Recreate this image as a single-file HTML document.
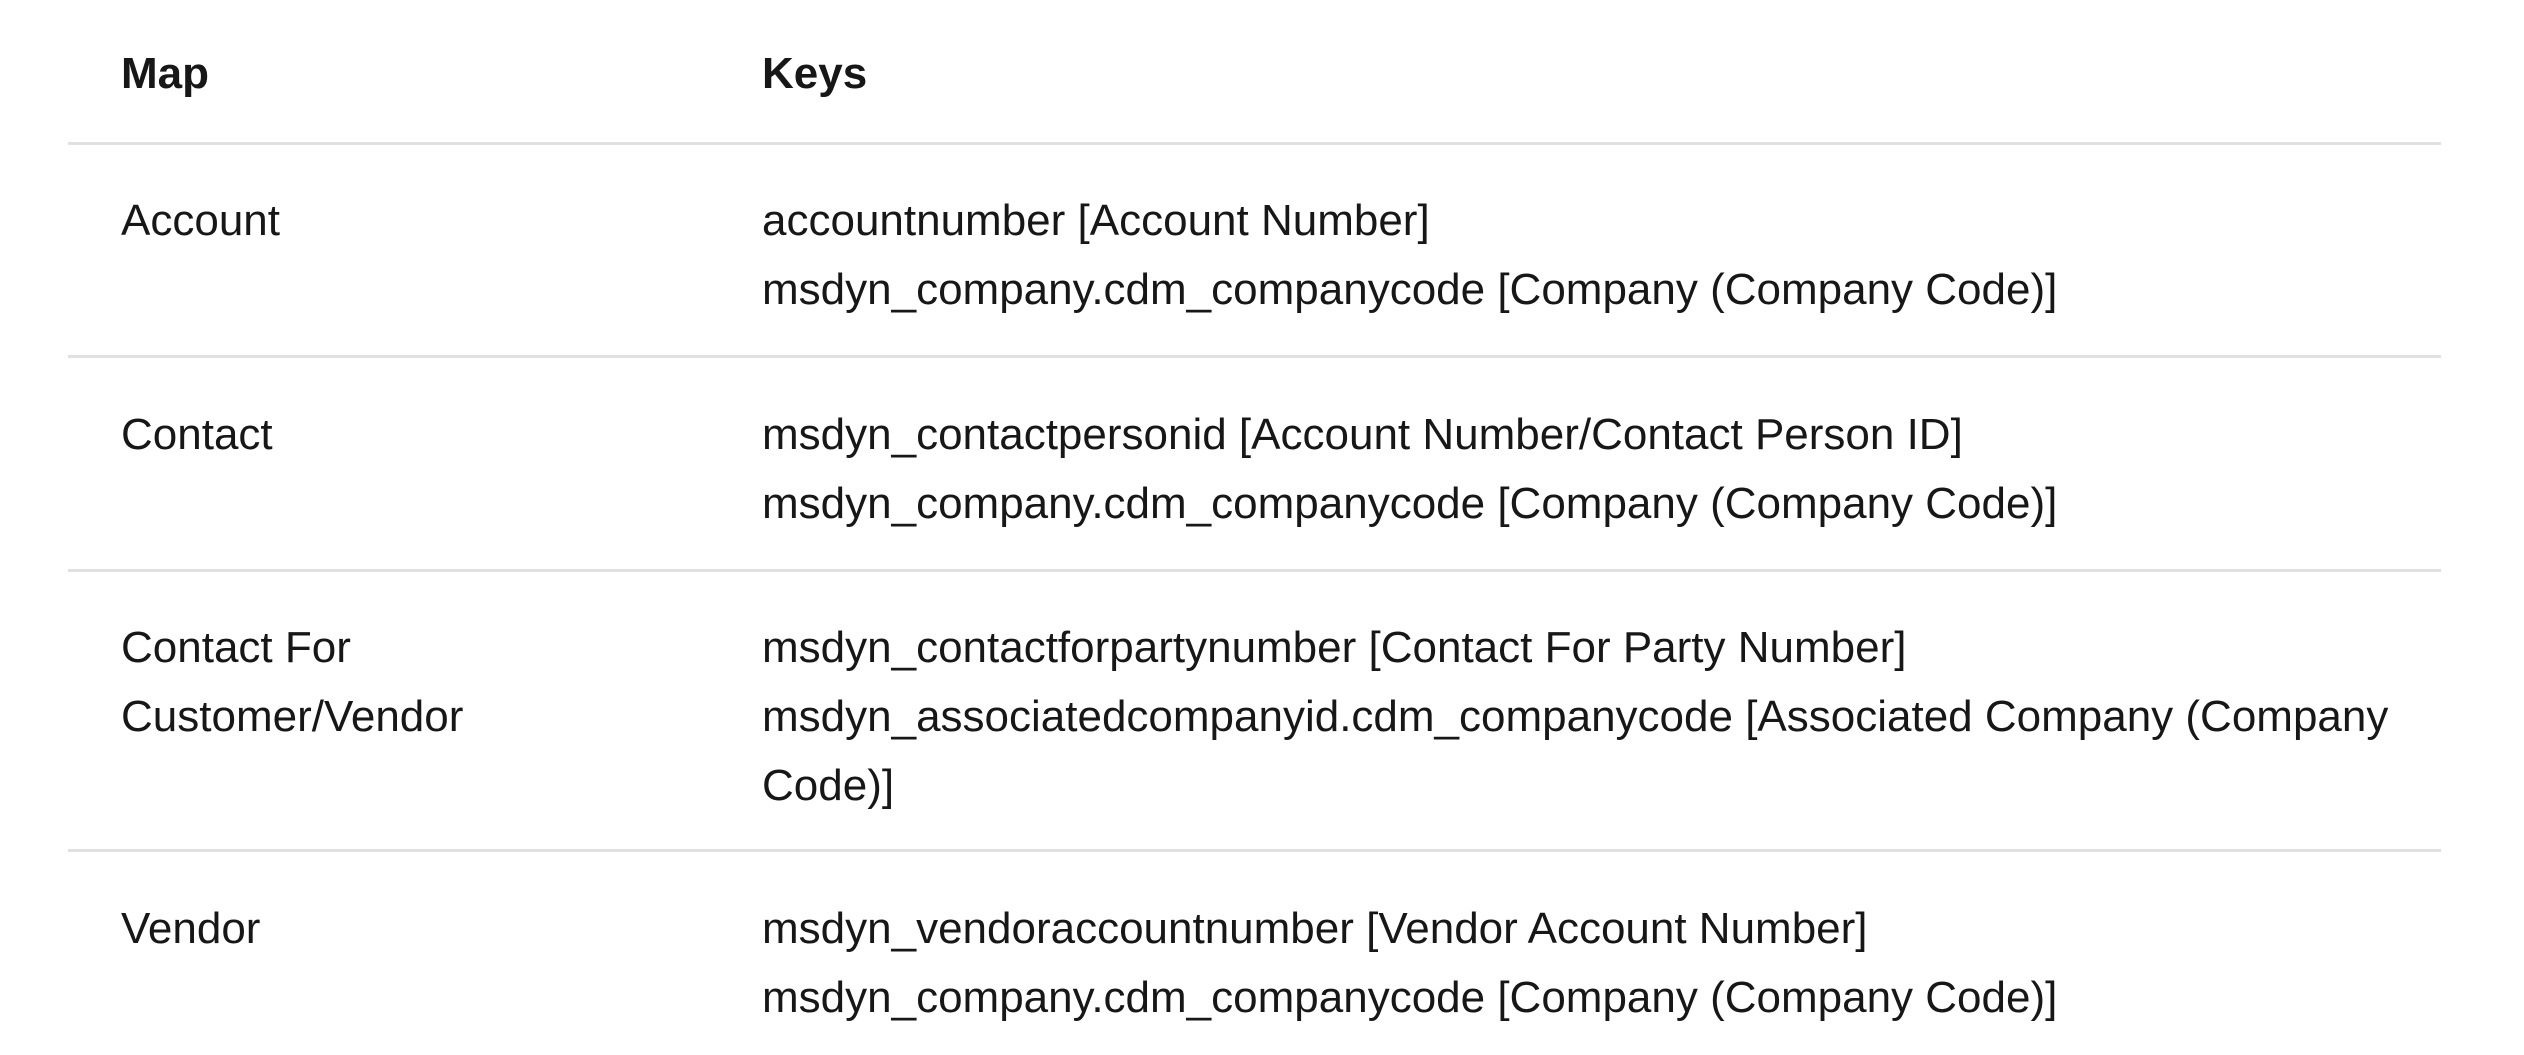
<!DOCTYPE html>
<html><head><meta charset="utf-8"><style>
html,body{margin:0;padding:0;background:#fff;width:2524px;height:1055px;overflow:hidden}
body{position:relative;font-family:"Segoe UI","Liberation Sans",sans-serif;font-size:44px;color:#171717}
.t{position:absolute;line-height:69px;white-space:nowrap}
.h{font-weight:bold}
.r{position:absolute;left:68px;width:2373px;height:3px;background:#e1e1e1}
</style></head><body>
<div class="t h" style="left:121px;top:39px">Map</div>
<div class="t h" style="left:762px;top:39px">Keys</div>
<div class="r" style="top:142px"></div>
<div class="t" style="left:121px;top:186px">Account</div>
<div class="t" style="left:762px;top:186px">accountnumber [Account Number]<br>msdyn_company.cdm_companycode [Company (Company Code)]</div>
<div class="r" style="top:355px"></div>
<div class="t" style="left:121px;top:400px">Contact</div>
<div class="t" style="left:762px;top:400px">msdyn_contactpersonid [Account Number/Contact Person ID]<br>msdyn_company.cdm_companycode [Company (Company Code)]</div>
<div class="r" style="top:569px"></div>
<div class="t" style="left:121px;top:613px">Contact For<br>Customer/Vendor</div>
<div class="t" style="left:762px;top:613px">msdyn_contactforpartynumber [Contact For Party Number]<br>msdyn_associatedcompanyid.cdm_companycode [Associated Company (Company<br>Code)]</div>
<div class="r" style="top:849px"></div>
<div class="t" style="left:121px;top:894px">Vendor</div>
<div class="t" style="left:762px;top:894px">msdyn_vendoraccountnumber [Vendor Account Number]<br>msdyn_company.cdm_companycode [Company (Company Code)]</div>
</body></html>
